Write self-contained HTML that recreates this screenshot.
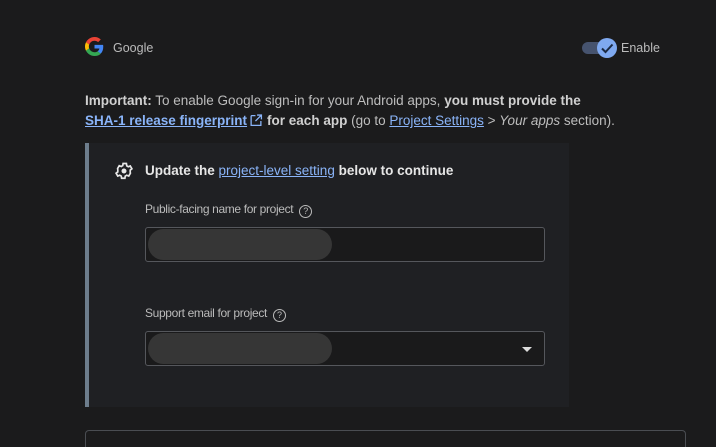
<!DOCTYPE html>
<html style="overflow:hidden"><head><style>
html,body{height:447px}
body{margin:0;width:716px;background:#1b1b1c;font-family:"Liberation Sans",sans-serif;color:#bdbdbd;position:relative;overflow:hidden;font-size:12.5px}
.a{position:absolute}
a{color:#8ab4f8;text-decoration:underline}
b{color:#d0d0d0}
.panel{left:85px;top:143px;width:484px;height:264px;background:#1f2023;border-left:4px solid #6d7d8c;box-sizing:border-box}
.inp{left:145px;width:400px;height:35px;border:1px solid #55575c;border-radius:3px;background:#1a1a1b;box-sizing:border-box}
.blob{position:absolute;left:2px;top:1px;width:184px;height:31px;border-radius:16px;background:#363636}
.lbl{font-size:12px;letter-spacing:-0.35px;color:#bbb}
.q{display:inline-block;width:11px;height:11px;border:1.3px solid #bbb;border-radius:50%;font-size:9px;line-height:11px;text-align:center;margin-left:6px;vertical-align:-1px;letter-spacing:0}
</style></head><body>
<svg class="a" style="left:85px;top:37px" width="19" height="19" viewBox="0 0 48 48"><path fill="#EA4335" d="M24 9.5c3.5 0 6.6 1.2 9.1 3.6l6.8-6.8C35.8 2.4 30.3 0 24 0 14.6 0 6.6 5.4 2.6 13.3l7.9 6.2C12.4 13.7 17.7 9.5 24 9.5z"/><path fill="#4285F4" d="M46.1 24.5c0-1.6-.1-3.1-.4-4.5H24v9h12.4c-.5 2.9-2.200 5.4-4.7 7.1l7.7 6c4.5-4.2 6.7-10.3 6.7-17.6z"/><path fill="#FBBC05" d="M10.5 28.6c-.5-1.4-.8-3-.8-4.6s.3-3.2.8-4.6l-7.9-6.2C.9 16.5 0 20.1 0 24s.9 7.5 2.6 10.8l7.9-6.2z"/><path fill="#34A853" d="M24 48c6.5 0 11.9-2.1 15.9-5.8l-7.700-6c-2.2 1.5-5 2.3-8.2 2.3-6.3 0-11.6-4.2-13.5-10l-7.9 6.2C6.6 42.6 14.6 48 24 48z"/></svg>
<div class="a" style="left:113px;top:41px;color:#bbb">Google</div>
<div class="a" style="left:582px;top:42px;width:30px;height:12px;border-radius:6px;background:#46536e"></div>
<div class="a" style="left:597px;top:38px;width:20px;height:20px;border-radius:50%;background:#7fa9f0"></div>
<svg class="a" style="left:597px;top:38px" width="20" height="20"><path d="M5 10.5l3.5 3.5 7-7.5" stroke="#1b2a44" stroke-width="2" fill="none"/></svg>
<div class="a" style="left:621px;top:41px;color:#bbb">Enable</div>
<div class="a" style="left:85px;top:91px;line-height:20px;width:600px;font-size:13.5px;white-space:nowrap"><b>Important:</b> To enable Google sign-in for your Android apps, <b>you must provide the</b><br><a style="font-weight:bold">SHA-1 release fingerprint</a><svg width="14" height="13" viewBox="0 0 12 12" style="margin:0 4px 0 2px;vertical-align:-2px"><path d="M1.5 1.5h4M1.5 1.5v9h9v-4M7 1h4v4M11 1L5.5 6.5" stroke="#8ab4f8" stroke-width="1.2" fill="none"/></svg><b>for each app</b> (go to <a>Project Settings</a> &gt; <i>Your apps</i> section).</div>
<div class="a panel"></div>
<svg class="a" style="left:114px;top:161px" width="20" height="20" viewBox="0 0 24 24"><path fill="none" stroke="#e8e8e8" stroke-width="2" d="M19.4 13c.04-.3.06-.6.06-1s-.02-.7-.06-1l2.1-1.6-2-3.5-2.5 1c-.5-.4-1.1-.7-1.7-1L14.9 3h-4l-.4 2.6c-.6.25-1.200.6-1.7 1l-2.500-1-2 3.5L4.6 11c-.04.3-.06.7-.06 1s.02.7.06 1l-2.1 1.6 2 3.5 2.5-1c.5.4 1.1.7 1.7 1l.4 2.6h4l.4-2.6c.6-.25 1.2-.6 1.7-1l2.5 1 2-3.5z"/><circle cx="12" cy="12" r="3" fill="#e8e8e8"/></svg>
<div class="a" style="left:145px;top:163px;color:#e6e6e6;font-weight:bold;font-size:13.5px">Update the <a style="font-weight:normal">project-level setting</a> below to continue</div>
<div class="a lbl" style="left:145px;top:202px">Public-facing name for project<span class="q">?</span></div>
<div class="a inp" style="top:227px"><div class="blob"></div></div>
<div class="a lbl" style="left:145px;top:306px">Support email for project<span class="q">?</span></div>
<div class="a inp" style="top:331px"><div class="blob"></div><div class="a" style="right:12px;top:15px;width:0;height:0;border-left:5px solid transparent;border-right:5px solid transparent;border-top:5px solid #ddd"></div></div>
<div class="a" style="left:85px;top:430px;width:601px;height:17px;border:1px solid #4a4d52;border-bottom:none;border-radius:4px 4px 0 0;box-sizing:border-box"></div>
</body></html>
